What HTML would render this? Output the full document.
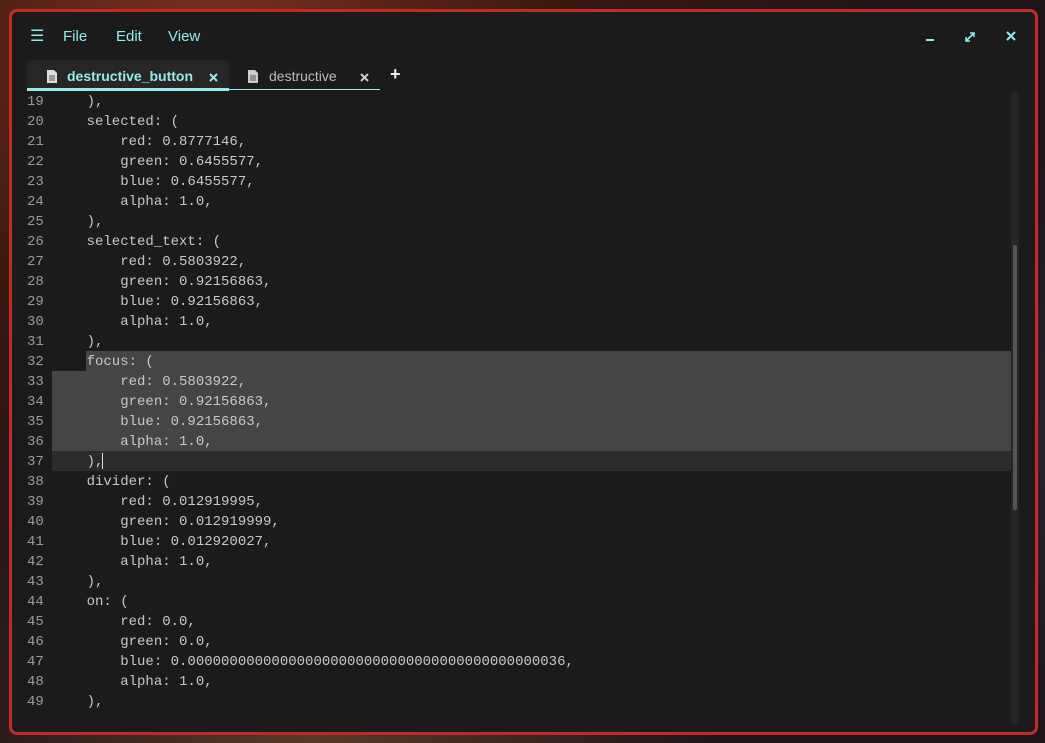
<!DOCTYPE html>
<html><head><meta charset="utf-8"><style>
html,body{margin:0;padding:0;width:1045px;height:743px;overflow:hidden;
background:radial-gradient(ellipse at 20% 5%,#7a3020 0%,#3a1810 30%,transparent 60%),radial-gradient(ellipse at 90% 60%,#2a2430 0%,transparent 50%),radial-gradient(ellipse at 30% 100%,#5a3828 0%,transparent 40%),#1c1418;}
.win{position:absolute;left:9px;top:9px;width:1023px;height:720px;border:3px solid #c42a2a;border-radius:8px;background:#1b1b1b;overflow:hidden;font-family:"Liberation Sans",sans-serif;}
.menu{position:absolute;top:16px;font-size:15px;color:#94ebeb;}
.mono{font-family:"Liberation Mono",monospace;font-size:14px;color:#c8c8c8;}
.ln{position:absolute;left:15px;width:30px;color:#9a9a9a}
.code{position:absolute;left:74px;white-space:pre}
.row{position:absolute;left:0;height:20px;line-height:20px;width:1000px}
</style></head><body>
<div class="win">
 <div class="menu" style="left:18px;font-size:16px;top:14px">☰</div>
 <div class="menu" style="left:51px">File</div>
 <div class="menu" style="left:104px">Edit</div>
 <div class="menu" style="left:156px">View</div>
 <div style="position:absolute;left:914px;top:27px;width:8px;height:2px;background:#94ebeb"></div>
 <svg style="position:absolute;left:952px;top:19px" width="12" height="12"><path d="M2 10L10 2M6 2H10V6M2 6V10H6" stroke="#94ebeb" stroke-width="1.6" fill="none"/></svg>
 <svg style="position:absolute;left:994px;top:19px" width="10" height="10"><path d="M1 1L9 9M9 1L1 9" stroke="#94ebeb" stroke-width="2"/></svg>
 <div style="position:absolute;left:15px;top:48px;width:202px;height:28px;background:#262626;border-radius:6px 6px 0 0"></div>
 <div style="position:absolute;left:15px;top:76px;width:202px;height:3px;background:#94ebeb"></div>
 <div style="position:absolute;left:217px;top:77px;width:151px;height:1px;background:#94ebeb"></div>
 <svg style="position:absolute;left:34px;top:57px" width="12" height="15"><path d="M1 1H8L11 4V14H1Z" fill="#ddd"/><path d="M3 7H9M3 9H9M3 11H9" stroke="#555"/></svg>
 <div style="position:absolute;left:55px;top:56px;font-size:14px;font-weight:bold;color:#94ebeb">destructive_button</div>
 <svg style="position:absolute;left:197px;top:61px" width="9" height="9"><path d="M1 1L8 8M8 1L1 8" stroke="#94ebeb" stroke-width="2"/></svg>
 <svg style="position:absolute;left:235px;top:57px" width="12" height="15"><path d="M1 1H8L11 4V14H1Z" fill="#ccc"/><path d="M3 7H9M3 9H9M3 11H9" stroke="#555"/></svg>
 <div style="position:absolute;left:257px;top:56px;font-size:14px;color:#bbb">destructive</div>
 <svg style="position:absolute;left:348px;top:61px" width="9" height="9"><path d="M1 1L8 8M8 1L1 8" stroke="#ccc" stroke-width="2"/></svg>
 <div style="position:absolute;left:378px;top:52px;font-size:18px;font-weight:bold;color:#eee">+</div>
 <div style="position:absolute;left:999px;top:80px;width:8px;height:632px;background:#262626;border-radius:4px"></div>
 <div style="position:absolute;left:1001px;top:233px;width:4px;height:265px;background:#555;border-radius:2px"></div>
 <div style="position:absolute;left:74px;top:339px;width:925px;height:20px;background:#454545"></div>
 <div style="position:absolute;left:40px;top:359px;width:959px;height:80px;background:#454545"></div>
 <div style="position:absolute;left:40px;top:439px;width:959px;height:20px;background:#2b2b2b"></div>
 <div style="position:absolute;left:90px;top:441px;width:1px;height:16px;background:#ddd"></div>
 <div class="mono" id="c" style="position:absolute;left:0;top:80px"></div>
</div>
<script>
var L=["    ),","    selected: (","        red: 0.8777146,","        green: 0.6455577,","        blue: 0.6455577,","        alpha: 1.0,","    ),","    selected_text: (","        red: 0.5803922,","        green: 0.92156863,","        blue: 0.92156863,","        alpha: 1.0,","    ),","    focus: (","        red: 0.5803922,","        green: 0.92156863,","        blue: 0.92156863,","        alpha: 1.0,","    ),","    divider: (","        red: 0.012919995,","        green: 0.012919999,","        blue: 0.012920027,","        alpha: 1.0,","    ),","    on: (","        red: 0.0,","        green: 0.0,","        blue: 0.000000000000000000000000000000000000000000036,","        alpha: 1.0,","    ),"];
var h="";for(var i=0;i<L.length;i++){h+='<div class="row" style="top:'+(i*20)+'px"><span class="ln">'+(19+i)+'</span><span class="code" style="left:41px">'+L[i]+'</span></div>';}
document.getElementById("c").innerHTML=h;
</script>
</body></html>
